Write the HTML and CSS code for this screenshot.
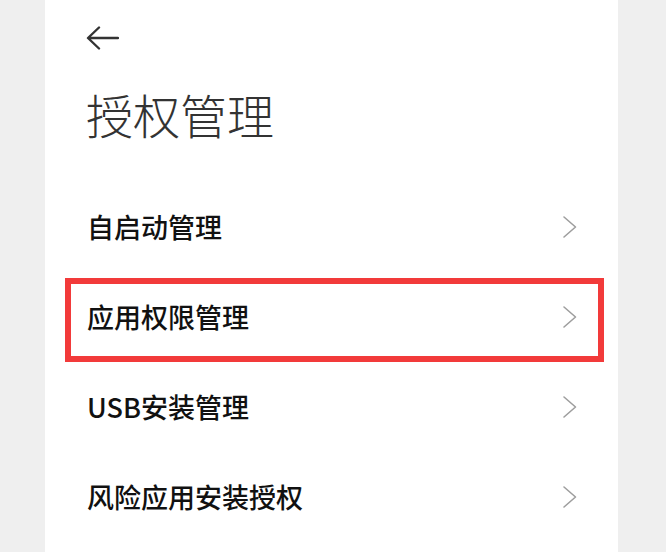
FILE: index.html
```html
<!DOCTYPE html>
<html lang="zh-CN">
<head>
<meta charset="utf-8">
<title>授权管理</title>
<link rel="stylesheet" href="styles.css">
</head>
<body>
<div class="panel">
  <div class="back">
    <svg width="33" height="24" viewBox="0 0 33 24" aria-hidden="true">
      <path d="M32 12 H2.5 M13 1.5 L2 12 L13 22.5" fill="none" stroke="#333" stroke-width="2.4" stroke-linecap="round" stroke-linejoin="round"/>
    </svg>
  </div>
  <h1 class="title">授权管理</h1>
  <ul class="list">
    <li class="row"><span class="label">自启动管理</span><svg class="chev" width="16" height="24" viewBox="0 0 16 24"><path d="M2 2 L13.5 12 L2 22" fill="none" stroke="#9e9e9e" stroke-width="1.6" stroke-linecap="round" stroke-linejoin="round"/></svg></li>
    <li class="row row-marked"><span class="label">应用权限管理</span><svg class="chev" width="16" height="24" viewBox="0 0 16 24"><path d="M2 2 L13.5 12 L2 22" fill="none" stroke="#9e9e9e" stroke-width="1.6" stroke-linecap="round" stroke-linejoin="round"/></svg></li>
    <li class="row"><span class="label">USB安装管理</span><svg class="chev" width="16" height="24" viewBox="0 0 16 24"><path d="M2 2 L13.5 12 L2 22" fill="none" stroke="#9e9e9e" stroke-width="1.6" stroke-linecap="round" stroke-linejoin="round"/></svg></li>
    <li class="row"><span class="label">风险应用安装授权</span><svg class="chev" width="16" height="24" viewBox="0 0 16 24"><path d="M2 2 L13.5 12 L2 22" fill="none" stroke="#9e9e9e" stroke-width="1.6" stroke-linecap="round" stroke-linejoin="round"/></svg></li>
  </ul>
</div>
</body>
</html>
```
FILE: styles.css
```css
html, body {
  margin: 0;
  padding: 0;
  height: 100%;
}
body {
  background: #efefef;
  font-family: "Noto Sans CJK SC", "Noto Sans", sans-serif;
  overflow: hidden;
}
.panel {
  margin-left: 45px;
  width: 573px;
  height: 552px;
  background: #ffffff;
  overflow: hidden;
}
.back {
  padding: 26px 0 0 41px;
  height: 24px;
}
.back svg {
  display: block;
}
.title {
  margin: 34px 0 0 0;
  padding-left: 41px;
  font-size: 47px;
  line-height: 60px;
  font-weight: 300;
  color: #333333;
}
.list {
  list-style: none;
  margin: 38px 0 0 0;
  padding: 0;
}
.row {
  position: relative;
  height: 90px;
  display: flex;
  align-items: center;
  justify-content: space-between;
  padding: 0 40px 0 42px;
}
.label {
  font-size: 27px;
  line-height: 40px;
  color: #111111;
  font-weight: 500;
}
.chev {
  display: block;
}
.row-marked::after {
  content: "";
  position: absolute;
  left: 20px;
  right: 14px;
  top: 6px;
  bottom: 0;
  border: 6px solid #f23a3a;
}
```
